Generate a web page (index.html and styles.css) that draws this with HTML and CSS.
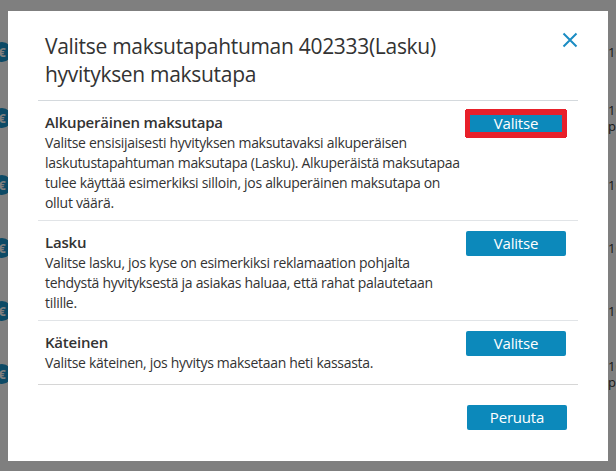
FILE: index.html
```html
<!DOCTYPE html>
<html lang="fi">
<head>
<meta charset="utf-8">
<title>Hyvityksen maksutapa</title>
<link rel="stylesheet" href="styles.css">
</head>
<body>
<div class="page">
  <ul class="payments">
    <li class="payment payment-first"><span class="coin">€</span><span class="amount">10,00 €</span></li>
    <li class="payment payment-tall"><span class="coin">€</span><span class="amount amount-two">10,00 €<br>palautettu</span></li>
    <li class="payment"><span class="coin">€</span><span class="amount">10,00 €</span></li>
    <li class="payment"><span class="coin">€</span><span class="amount">10,00 €</span></li>
    <li class="payment"><span class="coin">€</span><span class="amount">10,00 €</span></li>
    <li class="payment"><span class="coin">€</span><span class="amount amount-two">10,00 €<br>palautettu</span></li>
  </ul>
</div>
<div class="backdrop"></div>
<div class="modal" role="dialog">
  <div class="modal-header">
    <h2 class="modal-title">Valitse maksutapahtuman 402333(Lasku) hyvityksen maksutapa</h2>
    <button class="close" aria-label="Sulje">
      <svg width="16" height="16" viewBox="0 0 16 16"><path d="M1.5 1.5 L14.5 14.5 M14.5 1.5 L1.5 14.5" stroke="#1b8cc3" stroke-width="2" fill="none"/></svg>
    </button>
  </div>
  <ul class="options">
    <li class="option">
      <div class="option-text">
        <h3 class="option-title">Alkuperäinen maksutapa</h3>
        <p class="option-desc">Valitse ensisijaisesti hyvityksen maksutavaksi alkuperäisen laskutustapahtuman maksutapa (Lasku). Alkuperäistä maksutapaa tulee käyttää esimerkiksi silloin, jos alkuperäinen maksutapa on ollut väärä.</p>
      </div>
      <button class="btn btn-marked">Valitse</button>
    </li>
    <li class="option">
      <div class="option-text">
        <h3 class="option-title">Lasku</h3>
        <p class="option-desc">Valitse lasku, jos kyse on esimerkiksi reklamaation pohjalta tehdystä hyvityksestä ja asiakas haluaa, että rahat palautetaan tilille.</p>
      </div>
      <button class="btn">Valitse</button>
    </li>
    <li class="option option-last">
      <div class="option-text">
        <h3 class="option-title">Käteinen</h3>
        <p class="option-desc">Valitse käteinen, jos hyvitys maksetaan heti kassasta.</p>
      </div>
      <button class="btn">Valitse</button>
    </li>
  </ul>
  <div class="modal-footer">
    <button class="btn">Peruuta</button>
  </div>
</div>
</body>
</html>
```

FILE: styles.css
```css
* { box-sizing: border-box; }
html, body {
  margin: 0;
  padding: 0;
  width: 616px;
  height: 471px;
  overflow: hidden;
  background: #fff;
  font-family: "Open Sans", "Noto Sans", sans-serif;
  color: #333;
}

/* background page (under the backdrop) */
.page { width: 616px; height: 471px; overflow: hidden; }
.payments {
  list-style: none;
  margin: 0;
  padding: 21px 0 0;
  width: 680px;
  display: flex;
  flex-direction: column;
}
.payment {
  height: 63px;
  display: flex;
  align-items: center;
  justify-content: space-between;
}
.payment-first { height: 62px; }
.payment-tall { height: 70px; }
.coin {
  width: 20px;
  height: 20px;
  margin-left: -8px;
  border-radius: 50%;
  background: #1894cc;
  color: #fff;
  font-size: 13px;
  line-height: 20px;
  text-align: center;
  font-weight: 700;
}
.amount {
  width: 72px;
  white-space: nowrap;
  font-family: "Open Sans", sans-serif;
  font-size: 13px;
  line-height: 16px;
  color: #333;
}
.amount-two { line-height: 16px; }

.backdrop {
  position: fixed;
  inset: 0;
  background: rgba(0, 0, 0, 0.5);
}

/* modal */
.modal {
  position: fixed;
  left: 8px;
  top: 11px;
  width: 600px;
  height: 450px;
  background: #fff;
  padding: 0 30px;
}
.modal-header {
  display: flex;
  align-items: flex-start;
  justify-content: space-between;
  padding: 21px 0 12px 7px;
  border-bottom: 1px solid #d4d9dd;
}
.modal-title {
  margin: 0;
  max-width: 470px;
  font-size: 21px;
  font-weight: 400;
  line-height: 28px;
  letter-spacing: -0.3px;
  color: #333;
}
.close {
  border: 0;
  background: none;
  padding: 0;
  width: 16px;
  height: 16px;
  display: flex;
}

.options {
  list-style: none;
  margin: 0;
  padding: 0;
}
.option {
  display: flex;
  justify-content: space-between;
  align-items: flex-start;
  padding: 10px 12px 7px 7px;
  border-bottom: 1px solid #e1e4e7;
}
.option-last {
  padding-bottom: 11px;
  border-bottom-color: #d6d6d6;
}
.option-text { width: 420px; }
.option-title {
  margin: 0;
  font-size: 15px;
  font-weight: 600;
  line-height: 22px;
  letter-spacing: -0.2px;
  color: #333;
}
.option-desc {
  margin: 0;
  font-size: 14px;
  line-height: 20px;
  letter-spacing: -0.3px;
  color: #333;
}

.btn {
  width: 100px;
  height: 25px;
  border: 0;
  border-radius: 2px;
  background: #0c89bb;
  color: #fff;
  font-family: "Open Sans", "Noto Sans", sans-serif;
  font-size: 15px;
  line-height: 25px;
  padding: 0;
  letter-spacing: -0.2px;
}
.btn-marked {
  border-radius: 0;
  box-shadow: inset 0 0 0 4px #e8202a, 0 0 0 1px #e8202a, 0 2px 0 0 #e8202a, 0 -2px 0 0 #e8202a;
}

.modal-footer {
  display: flex;
  justify-content: flex-end;
  padding: 20px 11px 0 0;
}
```
